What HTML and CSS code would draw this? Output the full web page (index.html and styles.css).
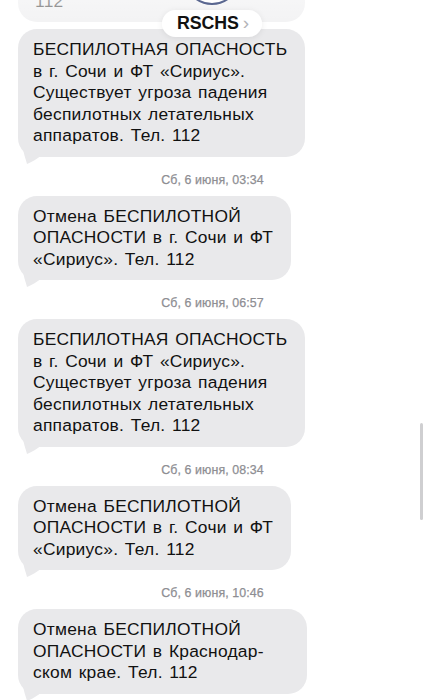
FILE: index.html
```html
<!DOCTYPE html>
<html lang="ru">
<head>
<meta charset="utf-8">
<title>RSCHS</title>
<link rel="stylesheet" href="styles.css">
</head>
<body>
<div class="screen">
  <div class="thread">
    <div class="bubble bubble-prev">112</div>
    <div class="bubble tail">БЕСПИЛОТНАЯ ОПАСНОСТЬ<br>в г. Сочи и ФТ «Сириус».<br>Существует угроза падения<br>беспилотных летательных<br>аппаратов. Тел. 112<svg class="tail-svg" viewBox="0 0 30 16" width="30" height="16"><path d="M5 0 C6 6 8 11 9 15 C14 13 19 10 24 6 L24 0 Z"/></svg></div>
    <div class="stamp">Сб, 6 июня, 03:34</div>
    <div class="bubble tail">Отмена БЕСПИЛОТНОЙ<br>ОПАСНОСТИ в г. Сочи и ФТ<br>«Сириус». Тел. 112<svg class="tail-svg" viewBox="0 0 30 16" width="30" height="16"><path d="M5 0 C6 6 8 11 9 15 C14 13 19 10 24 6 L24 0 Z"/></svg></div>
    <div class="stamp">Сб, 6 июня, 06:57</div>
    <div class="bubble tail">БЕСПИЛОТНАЯ ОПАСНОСТЬ<br>в г. Сочи и ФТ «Сириус».<br>Существует угроза падения<br>беспилотных летательных<br>аппаратов. Тел. 112<svg class="tail-svg" viewBox="0 0 30 16" width="30" height="16"><path d="M5 0 C6 6 8 11 9 15 C14 13 19 10 24 6 L24 0 Z"/></svg></div>
    <div class="stamp">Сб, 6 июня, 08:34</div>
    <div class="bubble tail">Отмена БЕСПИЛОТНОЙ<br>ОПАСНОСТИ в г. Сочи и ФТ<br>«Сириус». Тел. 112<svg class="tail-svg" viewBox="0 0 30 16" width="30" height="16"><path d="M5 0 C6 6 8 11 9 15 C14 13 19 10 24 6 L24 0 Z"/></svg></div>
    <div class="stamp">Сб, 6 июня, 10:46</div>
    <div class="bubble bubble-wide tail">Отмена БЕСПИЛОТНОЙ<br>ОПАСНОСТИ в Краснодар-<br>ском крае. Тел. 112<svg class="tail-svg" viewBox="0 0 30 16" width="30" height="16"><path d="M5 0 C6 6 8 11 9 15 C14 13 19 10 24 6 L24 0 Z"/></svg></div>
  </div>

  <div class="header">
    <div class="avatar"></div>
    <div class="contact-pill"><span class="contact-name">RSCHS</span><span class="chev">›</span></div>
  </div>
  <div class="scrollbar"></div>
</div>
</body>
</html>
```

FILE: styles.css
```css
* { box-sizing: border-box; }
html, body {
  margin: 0;
  padding: 0;
  background: #ffffff;
}
.screen {
  position: relative;
  width: 425px;
  height: 700px;
  overflow: hidden;
  font-family: "Liberation Sans", Arial, sans-serif;
}
.thread {
  display: flex;
  flex-direction: column;
  align-items: flex-start;
  padding: 0 18px;
}
.bubble {
  position: relative;
  width: fit-content;
  background: #e9e9eb;
  color: #111111;
  font-size: 17.4px;
  letter-spacing: 0.25px;
  word-spacing: 1.5px;
  line-height: 21.5px;
  padding: 10px 18px 10px 15px;
  border-radius: 19px;
  white-space: nowrap;
}
.bubble-prev {
  margin-top: -19.5px;
  margin-bottom: 7px;
  width: 287px;
  padding-left: 17px;
}
.bubble-wide {
  width: 289px;
}
.tail-svg {
  position: absolute;
  left: 0;
  bottom: -8px;
  fill: #e9e9eb;
}
.stamp {
  align-self: center;
  margin: 16px 0 9px;
  font-size: 12.4px;
  line-height: 14px;
  color: #8e8e93;
  font-weight: 400;
  letter-spacing: 0.1px;
  -webkit-text-stroke: 0.25px #8e8e93;
}
.header {
  position: absolute;
  top: 0;
  left: 0;
  right: 0;
  height: 42px;
  display: flex;
  justify-content: center;
  background: linear-gradient(to bottom, rgba(255,255,255,0.6) 0, rgba(255,255,255,0.45) 22px, rgba(255,255,255,0) 27px);
}
.avatar {
  position: absolute;
  top: -51px;
  left: 184px;
  width: 56px;
  height: 56px;
  border-radius: 50%;
  border: 2.5px solid #5a6790;
  background: #ffffff;
}
.contact-pill {
  position: absolute;
  top: 10px;
  left: 162px;
  width: 100px;
  height: 27px;
  border-radius: 14px;
  background: rgba(255,255,255,0.96);
  box-shadow: 0 1px 6px rgba(0,0,0,0.08);
  display: flex;
  align-items: center;
  justify-content: center;
  gap: 4px;
  padding-left: 2px;
}
.contact-name {
  font-weight: 700;
  font-size: 17.8px;
  color: #111111;
  letter-spacing: -0.1px;
}
.chev {
  font-size: 19px;
  line-height: 1;
  color: #b4b4b8;
  font-weight: 400;
  margin-top: -2px;
}
.scrollbar {
  position: absolute;
  right: 2px;
  top: 423px;
  width: 3.5px;
  height: 97px;
  border-radius: 2px;
  background: #cfcfd1;
}
```
